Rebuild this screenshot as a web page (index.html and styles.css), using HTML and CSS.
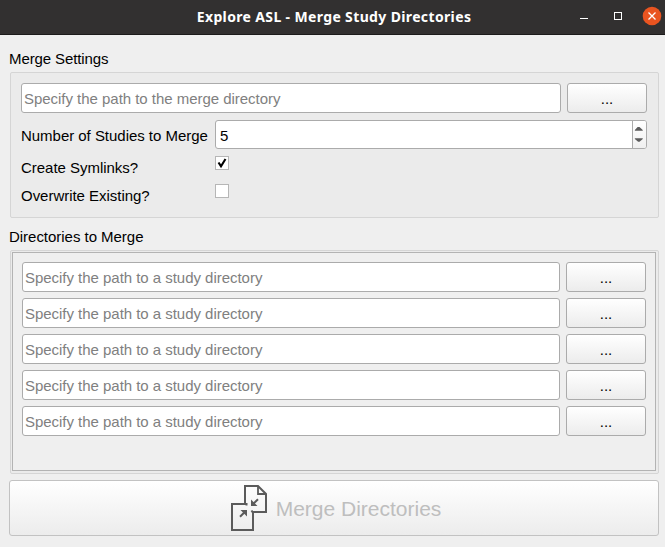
FILE: index.html
```html
<!DOCTYPE html>
<html lang="en">
<head>
<meta charset="utf-8">
<title>Explore ASL - Merge Study Directories</title>
<link rel="stylesheet" href="styles.css">
</head>
<body>
<header class="titlebar">
  <h1 class="title">Explore ASL - Merge Study Directories</h1>
  <svg class="controls" width="90" height="34" viewBox="0 0 90 34" fill="none">
    <path d="M5 18.5h8" stroke="#fff"/>
    <rect x="39.5" y="12.5" width="7" height="7" stroke="#fff"/>
    <circle cx="77" cy="16" r="9.3" fill="#e95420"/>
    <path d="M73.5 12.500l7 7m0-7l-7 7" stroke="#fff" stroke-width="1.3"/>
  </svg>
</header>
<main class="content">
  <h2 class="heading tight">Merge Settings</h2>
  <section class="group settings">
    <div class="row">
      <div class="field"><span class="hint">Specify the path to the merge directory</span></div>
      <button class="button browse">...</button>
    </div>
    <div class="form">
      <span class="label">Number of Studies to Merge</span>
      <div class="spin">
        <span class="value">5</span>
        <svg class="steps" width="14" height="27" viewBox="0 0 14 27">
          <path d="M2 9.500V8.700L5 5.500h2l3.500 3.200v.8zM2 17.500h8.500v.8L7 21.300H5.500L2 18.300z" fill="#5c5c5c"/>
        </svg>
      </div>
      <span class="label">Create Symlinks?</span>
      <span class="check"><svg width="12" height="12" viewBox="0 0 12 12"><path d="M2.500 5.500L5 9.200 9.500 2" fill="none" stroke="#000" stroke-width="2.100"/></svg></span>
      <span class="label">Overwrite Existing?</span>
      <span class="check"></span>
    </div>
  </section>
  <h2 class="heading second">Directories to Merge</h2>
  <section class="group directories">
    <div class="scroll">
      <div class="row"><div class="field"><span class="hint">Specify the path to a study directory</span></div><button class="button browse">...</button></div>
      <div class="row"><div class="field"><span class="hint">Specify the path to a study directory</span></div><button class="button browse">...</button></div>
      <div class="row"><div class="field"><span class="hint">Specify the path to a study directory</span></div><button class="button browse">...</button></div>
      <div class="row"><div class="field"><span class="hint">Specify the path to a study directory</span></div><button class="button browse">...</button></div>
      <div class="row"><div class="field"><span class="hint">Specify the path to a study directory</span></div><button class="button browse">...</button></div>
    </div>
  </section>
  <button class="button merge" disabled>
    <svg width="37" height="46" viewBox="0 0 37 46" fill="none" stroke="#5b5b5b" stroke-width="2">
      <path d="M15.500 20.500V19H1v26h21V27.500M14 20V1h13l8 8v18H21.500l-1-1.500"/>
      <path d="M27 1v8h8" stroke-width="1.800"/>
      <path d="M9 31.800l5.500-5.500M27 14.200l-5.500 5.500"/>
      <path d="M9.500 25H16v6.500zM20 14.500V21h6.500z" fill="#5b5b5b" stroke="none"/>
    </svg>
    <span class="merge-text">Merge Directories</span>
  </button>
</main>
</body>
</html>
```
FILE: styles.css
```css
* { box-sizing: border-box; }
body {
  margin: 0;
  width: 665px;
  height: 547px;
  overflow: hidden;
  background: #efefef;
  color: #000;
  font: 15px/18px "Liberation Sans", sans-serif;
  letter-spacing: -0.03px;
}
.titlebar {
  display: grid;
  grid-template-columns: 90px 1fr 90px;
  align-items: center;
  height: 35px;
  background: #323030;
  border-bottom: 1px solid #1c1b1b;
}
.title {
  grid-column: 2;
  margin: 0;
  padding-left: 3px;
  text-align: center;
  white-space: nowrap;
  color: #fff;
  font: bold 14px/20px "Noto Sans", sans-serif;
  letter-spacing: 0.36px;
}
.controls { display: block; }
.content { padding: 15px 6px 0 9px; }
.heading { margin: 0 0 4px; font-size: 15px; line-height: 18px; font-weight: normal; }
.tight { letter-spacing: -0.1px; }
.group {
  margin-left: 1px;
  border: 1px solid #d5d5d5;
  border-radius: 2px;
  background: #ebebeb;
}
.settings { height: 146px; padding: 10px 11px 0 10px; }
.row { display: flex; gap: 6px; height: 30px; }
.field, .spin {
  flex: 1;
  display: flex;
  align-items: center;
  border: 1px solid #ababab;
  border-radius: 3px;
  background: #fff;
}
.field { padding: 2px 0 0 2px; }
.hint { color: #808080; white-space: nowrap; }
.button {
  padding: 0;
  border: 1px solid #ababab;
  border-radius: 3px;
  background: linear-gradient(#fff, #ececec);
  color: #000;
  font: 15px/18px "Liberation Sans", sans-serif;
}
.browse { flex: none; width: 80px; padding-top: 1px; }
.form {
  display: grid;
  grid-template-columns: 194px 1fr;
  grid-template-rows: 29px 28px 28px;
  margin-top: 7px;
}
.label { padding-top: 7px; white-space: nowrap; }
.form > .label:nth-of-type(n+2) { padding-top: 10px; }
.spin { height: 29px; padding-left: 4px; justify-content: space-between; }
.value { padding-top: 2px; }
.steps { border-left: 1px solid #ababab; background: linear-gradient(#fff, #f0f0f0); border-radius: 0 2px 2px 0; }
.check { width: 14px; height: 14px; margin-top: 7px; border: 1px solid #b6b6b6; background: #fff; }
.check svg { display: block; }
.second { margin-top: 10px; }
.directories { height: 224px; padding: 1px 2px 2px 1px; }
.scroll {
  display: flex;
  flex-direction: column;
  gap: 6px;
  height: 219px;
  padding: 9px;
  border: 1px solid #b3b3b3;
  background: #efefef;
}
.merge {
  display: flex;
  align-items: center;
  justify-content: center;
  gap: 8px;
  width: 650px;
  height: 56px;
  margin-top: 6px;
  padding-left: 4px;
  border-color: #c2c2c2;
  color: #bebebe;
  font-size: 21px;
  line-height: 26px;
}
.merge-text { padding-top: 2px; }
```
